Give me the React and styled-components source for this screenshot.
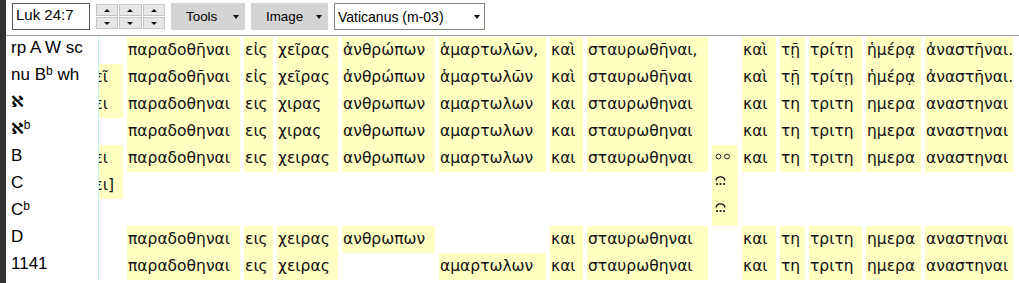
import React from "react";
import styled, { createGlobalStyle } from "styled-components";

const GlobalStyle = createGlobalStyle`
  body {
    margin: 0;
    background: #fff;
    font-family: "Liberation Sans", Arial, sans-serif;
  }
`;

const Frame = styled.div`
  min-height: 283px;
  border-left: 6px solid #333;
  box-sizing: border-box;
`;

const Toolbar = styled.div`
  display: flex;
  align-items: flex-start;
  gap: 6px;
  height: 32px;
  padding: 3px 0 0 6px;
  border-bottom: 1px solid #9c9c9c;
`;

const RefInput = styled.input`
  width: 78px;
  height: 27px;
  box-sizing: border-box;
  margin: 0;
  padding: 0 3px 5px;
  border: 1px solid #555;
  font-family: "Liberation Sans", Arial, sans-serif;
  font-size: 15px;
  color: #000;
  outline: none;
`;

const SpinGroup = styled.div`
  display: flex;
  gap: 1px;
  width: 69px;
  padding-top: 1px;
`;

const SpinCol = styled.div`
  display: flex;
  flex-direction: column;
  gap: 1px;
  flex: 1;
`;

const SpinButton = styled.div`
  height: 12px;
  box-sizing: border-box;
  background: #e6e6e6;
  border: 1px solid #c6c6c6;
  display: flex;
  align-items: center;
  justify-content: center;

  &::after {
    content: "";
    border-left: 3px solid transparent;
    border-right: 3px solid transparent;
    ${(p) => (p.$down ? "border-top: 3px solid #111;" : "border-bottom: 3px solid #111;")}
  }
`;

const MenuButton = styled.div`
  width: ${(p) => p.$w}px;
  height: 27px;
  box-sizing: border-box;
  background: #d4d4d4;
  display: flex;
  align-items: center;
  padding: 0 6px 0 15px;
  font-size: 13.4px;
  color: #000;
  justify-content: space-between;
`;

const Caret = styled.span`
  width: 0;
  height: 0;
  border-left: 3px solid transparent;
  border-right: 3px solid transparent;
  border-top: 4px solid #111;
`;

const Select = styled.div`
  width: 151px;
  height: 27px;
  box-sizing: border-box;
  border: 1px solid #7c8a78;
  display: flex;
  align-items: center;
  justify-content: space-between;
  padding: 0 4px 0 3px;
  font-size: 14px;
  color: #000;
`;

const Table = styled.div`
  display: flex;
  flex-direction: column;
  padding-top: 1px;
`;

const Row = styled.div`
  display: flex;
  height: 27px;
`;

const Label = styled.div`
  width: 87px;
  flex: none;
  padding-left: 5px;
  border-right: 1px solid #bff0f4;
  font-size: 17px;
  line-height: 22px;
  color: #000;
  white-space: nowrap;

  sup {
    font-size: 12px;
    vertical-align: 5px;
    line-height: 0;
  }
`;

const Alef = styled.span`
  font-family: "DejaVu Sans", sans-serif;
  font-weight: 700;
  font-size: 16px;
`;

const Cells = styled.div`
  display: grid;
  grid-template-columns: 24px 113px 29px 61px 93px 107px 33px 121px 26px 34px 25px 53px 55px 88px;
  column-gap: 4px;
`;

const Cell = styled.div`
  background: ${(p) => (p.$on ? "#ffffc2" : "transparent")};
  font-family: "DejaVu Sans", "Liberation Sans", sans-serif;
  font-size: 15.5px;
  line-height: 27px;
  padding-left: 1px;
  white-space: nowrap;
  overflow: hidden;
  color: #111;
  text-indent: ${(p) => (p.$clip ? "-15px" : "0")};
`;

const MarkCell = styled(Cell)`
  display: flex;
  align-items: flex-start;
  padding-left: 2px;
`;

const Oo = () => (
  <svg width="18" height="27" viewBox="0 0 18 27">
    <circle cx="4.5" cy="11.5" r="2.4" fill="none" stroke="#222" strokeWidth="1" />
    <circle cx="13" cy="11.5" r="2.4" fill="none" stroke="#222" strokeWidth="1" />
  </svg>
);

const ArcDots = () => (
  <svg width="14" height="27" viewBox="0 0 14 27">
    <path d="M2 8.5 A4.6 4.6 0 0 1 11 8.5" fill="none" stroke="#111" strokeWidth="1.4" />
    <circle cx="3" cy="12" r="1.1" fill="#111" />
    <circle cx="6.5" cy="12" r="1.1" fill="#111" />
    <circle cx="10" cy="12" r="1.1" fill="#111" />
  </svg>
);

const full = (e, a) => [
  "παραδοθῆναι", "εἰς", "χεῖρας", "ἀνθρώπων", a, "καὶ", e,
];
const tail = ["καὶ", "τῇ", "τρίτῃ", "ἡμέρᾳ", "ἀναστῆναι."];
const plainTail = ["και", "τη", "τριτη", "ημερα", "αναστηναι"];

const rows = [
  {
    label: "rp A W sc",
    first: null,
    words: [...full("σταυρωθῆναι,", "ἁμαρτωλῶν,")],
    mark: null,
    tail,
  },
  {
    label: (<>nu B<sup>b</sup> wh</>),
    first: "δεῖ",
    words: [...full("σταυρωθῆναι", "ἁμαρτωλῶν")],
    mark: null,
    tail,
  },
  {
    label: <Alef>ℵ</Alef>,
    first: "δει",
    words: ["παραδοθηναι", "εις", "χιρας", "ανθρωπων", "αμαρτωλων", "και", "σταυρωθηναι"],
    mark: null,
    tail: plainTail,
  },
  {
    label: (<><Alef>ℵ</Alef><sup>b</sup></>),
    first: null,
    words: ["παραδοθηναι", "εις", "χιρας", "ανθρωπων", "αμαρτωλων", "και", "σταυρωθηναι"],
    mark: null,
    tail: plainTail,
  },
  {
    label: "B",
    first: "δει",
    words: ["παραδοθηναι", "εις", "χειρας", "ανθρωπων", "αμαρτωλων", "και", "σταυρωθηναι"],
    mark: "oo",
    tail: plainTail,
  },
  {
    label: "C",
    first: "δει]",
    words: [null, null, null, null, null, null, null],
    mark: "arc",
    tail: [null, null, null, null, null],
  },
  {
    label: (<>C<sup>b</sup></>),
    first: null,
    words: [null, null, null, null, null, null, null],
    mark: "arc",
    tail: [null, null, null, null, null],
  },
  {
    label: "D",
    first: null,
    words: ["παραδοθηναι", "εις", "χειρας", "ανθρωπων", null, "και", "σταυρωθηναι"],
    mark: null,
    tail: plainTail,
  },
  {
    label: "1141",
    first: null,
    words: ["παραδοθηναι", "εις", "χειρας", null, "αμαρτωλων", "και", "σταυρωθηναι"],
    mark: null,
    tail: plainTail,
  },
];

const App = () => {
  return (
    <Frame>
      <GlobalStyle />
      <Toolbar>
        <RefInput defaultValue="Luk 24:7" readOnly />
        <SpinGroup>
          {[0, 1, 2].map((i) => (
            <SpinCol key={i}>
              <SpinButton />
              <SpinButton $down />
            </SpinCol>
          ))}
        </SpinGroup>
        <MenuButton $w={74}>
          Tools <Caret />
        </MenuButton>
        <MenuButton $w={77}>
          Image <Caret />
        </MenuButton>
        <Select>
          Vaticanus (m-03) <Caret />
        </Select>
      </Toolbar>
      <Table>
        {rows.map((r, i) => (
          <Row key={i}>
            <Label>{r.label}</Label>
            <Cells>
              <Cell $on={!!r.first} $clip>
                {r.first}
              </Cell>
              {r.words.map((w, j) => (
                <Cell key={j} $on={!!w}>
                  {w}
                </Cell>
              ))}
              <MarkCell $on={!!r.mark}>
                {r.mark === "oo" && <Oo />}
                {r.mark === "arc" && <ArcDots />}
              </MarkCell>
              {r.tail.map((w, j) => (
                <Cell key={j} $on={!!w}>
                  {w}
                </Cell>
              ))}
            </Cells>
          </Row>
        ))}
      </Table>
    </Frame>
  );
};

export default App;
